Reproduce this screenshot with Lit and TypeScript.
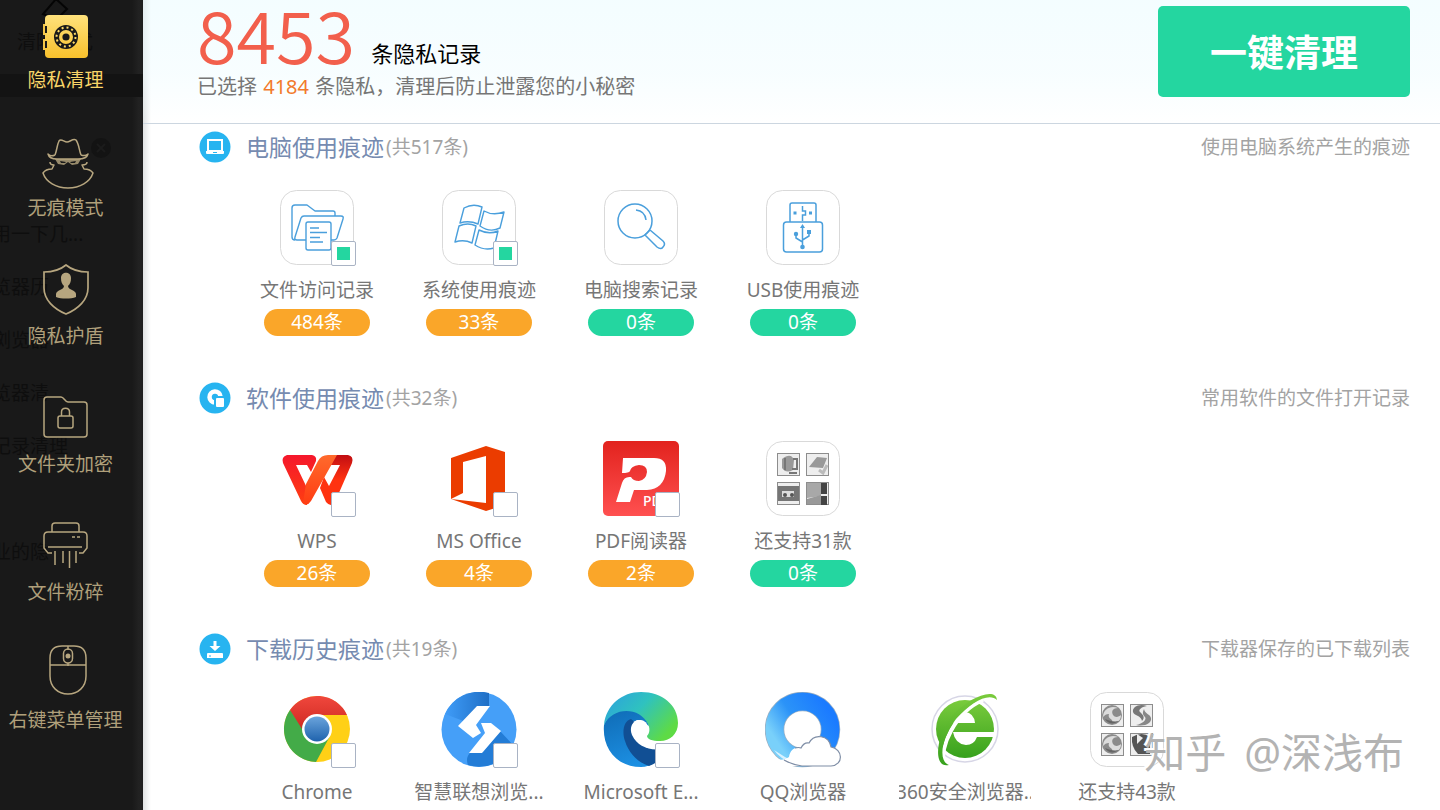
import { LitElement, html, svg, css, nothing } from "lit";
import type { SVGTemplateResult } from "lit";
import { customElement, property } from "lit/decorators.js";
import { classMap } from "lit/directives/class-map.js";

type Art = SVGTemplateResult;

interface TraceItem {
  name: string;
  art: Art;
  count?: number;
  check?: "on" | "off";
}

interface TraceGroup {
  title: string;
  total: number;
  note: string;
  mark: Art;
  items: TraceItem[];
}

const navItems: { label: string; art: Art }[] = [
  {
    label: "隐私清理",
    art: svg`
      <defs><linearGradient id="gold" x1="0" y1="0" x2="0" y2="1"><stop offset="0" stop-color="#ffe27c"/><stop offset="1" stop-color="#f7c02c"/></linearGradient></defs>
      <rect x="6" y="5" width="43" height="43" rx="4" fill="url(#gold)"/>
      <path d="M4 16h4v7H4zM4 31h4v7H4z" fill="#191919"/>
      <path d="M5 14v11M5 29v11" stroke="#f4c548" stroke-width="2"/>
      <circle cx="27" cy="27" r="9.5" fill="none" stroke="#191919" stroke-width="5"/>
      <circle cx="27" cy="27" r="9.5" fill="none" stroke="#ffdb66" stroke-width="2" stroke-dasharray="2 3"/>
      <circle cx="27" cy="27" r="3.6" fill="#191919"/>`,
  },
  {
    label: "无痕模式",
    art: svg`<g fill="none" stroke="#b7a67f" stroke-width="1.5" stroke-linejoin="round">
      <path d="M16 17c2-5 2-10 4-14 2-3 5 1 8 1s6-4 9-2c3 4 3 10 5 15M16 17c-2 1-5 1-7-1 1 4 5 5 9 5h21c5 0 9-1 10-5-2 2-4 2-7 1"/>
      <path d="M11 24c0 2 1 3 4 3l-2 4c-3 0-7 1-9 4 3 9 13 15 25 15s22-6 25-15c-2-3-6-4-9-4l-2-4c3 0 5-1 5-3"/></g>
      <path d="M16 21h26l-3 5-6 1-4-3-4 3-6-1z" fill="#b7a67f" opacity=".8"/>
      <path d="M21 23l6 1-1 1-4 0zM31 24l6-1-1 2-4 0z" fill="#191919"/>`,
  },
  {
    label: "隐私护盾",
    art: svg`<path d="M27-1C21 4 13 6 5 6v16c0 12 10 21 22 26 12-5 22-14 22-26V6C41 6 33 4 27-1z" fill="none" stroke="#b7a67f" stroke-width="1.7"/>
      <path d="M22 12c0-7 10-7 10 0 0 4-1 6-3 8 0 4 8 4 8 8v3c-5 2-15 2-20 0v-3c0-4 8-4 8-8-2-2-3-4-3-8z" fill="#b7a67f"/>`,
  },
  {
    label: "文件夹加密",
    art: svg`<g fill="none" stroke="#b7a67f" stroke-width="1.5">
      <path d="M8 3h14c3 0 4 5 7 5h16q3 0 3 3v29q0 3-3 3H8q-3 0-3-3V6q0-3 3-3z"/>
      <rect x="19" y="22" width="15" height="12" rx="2"/><path d="M22.500 22v-4c0-5 8-5 8 0v4"/></g>`,
  },
  {
    label: "文件粉碎",
    art: svg`<g fill="none" stroke="#b7a67f" stroke-width="1.5">
      <path d="M13 10V4q0-3 3-3h21q3 0 3 3v6"/>
      <path d="M13 31H9l-4-5V14q0-4 4-4h35q4 0 4 4v12l-4 5h-4M9 25h34M33 15h3M38 15h3M16 29v14M24 29v12M30.500 29v17M37 29v12"/></g>`,
  },
  {
    label: "右键菜单管理",
    art: svg`<g fill="none" stroke="#b7a67f" stroke-width="1.5">
      <path d="M11 8q0-12 12-12h12q12 0 12 12v18c0 11-8 18-18 18s-18-7-18-18zM11 15h36M29-4v4M29 13v3"/>
      <rect x="24.500" y="-1" width="9" height="14" rx="4.500"/></g><circle cx="29" cy="6" r="2.500" fill="#b7a67f"/>`,
  },
];

const plate = svg`<rect x="1.500" y="0.500" width="73" height="74" rx="16" fill="#fff" stroke="#d9d9d9"/>`;

const thumbFrames = svg`<g fill="#eee" stroke="#8d8d8d"><rect x="12.500" y="12.500" width="22" height="22"/><rect x="41.500" y="12.500" width="22" height="22"/><rect x="12.500" y="41.500" width="22" height="22"/><rect x="41.500" y="41.500" width="22" height="22"/></g>`;

const swirl = (x: number, y: number) => svg`<g transform="translate(${x} ${y})">
  <circle cx="11" cy="11" r="10" fill="#8b8b8b"/>
  <path d="M2 13C2 5 10 1 17 4c-5 0-7 3-5 7 2 3 6 2 8 0 0 6-4 8-9 7 2-3-5-3-3-8-3 0-4 1-6 3z" fill="#dcdcdc"/>
  <path d="M4 15c3 5 9 6 14 2-5 1-9 0-14-2z" fill="#666"/></g>`;

const groups: TraceGroup[] = [
  {
    title: "电脑使用痕迹",
    total: 517,
    note: "使用电脑系统产生的痕迹",
    mark: svg`<path d="M9 9h14v11H9z" fill="none" stroke="#fff" stroke-width="2"/><path d="M7 20h18v2q0 1-1 1H8q-1 0-1-1z" fill="#fff"/><path d="M14 21.500h4" stroke="#27b4f0"/>`,
    items: [
      {
        name: "文件访问记录",
        count: 484,
        check: "on",
        art: svg`${plate}<g fill="#fff" stroke="#4a9fdc" stroke-width="1.4" stroke-linejoin="round">
          <path d="M16 50q-3 0-3-3V18q0-3 3-3h12l8 6h18q2 0 2 2v3"/>
          <path d="M25 26h37q3 0 2 3l-6 19q-1 2-3 2H18q-3 0-2-3l6-19q1-2 3-2z"/>
          <rect x="27" y="32" width="25" height="28" rx="2"/><path d="M31 38h9M31 42.500h17M31 47.500h10M31 52h13"/></g>`,
      },
      {
        name: "系统使用痕迹",
        count: 33,
        check: "on",
        art: svg`${plate}<g fill="none" stroke="#4a9fdc" stroke-width="1.400" stroke-linejoin="round">
          <path d="M23 18q9-5 18-1l-4 17q-9-4-18-1zM43 21q9 5 20 1l-4 16q-10 5-20-2zM18 36q9-4 17 0l-4 17q-8-4-17-1zM38 40q10 5 19 1l-4 17q-10 3-19-3z"/></g>`,
      },
      {
        name: "电脑搜索记录",
        count: 0,
        art: svg`${plate}<g fill="none" stroke="#4a9fdc" stroke-width="1.500">
          <circle cx="32" cy="31" r="17"/><path d="M33 20q9 1 10 10M42 45l12 12q4 3 6 0 3-3 0-6L47 40M42 45l5-5"/></g>`,
      },
      {
        name: "USB使用痕迹",
        count: 0,
        art: svg`${plate}<g fill="none" stroke="#4a9fdc" stroke-width="1.500">
          <path d="M25 32V15q0-2 2-2h22q2 0 2 2v17"/><rect x="18.500" y="32" width="39" height="30" rx="3"/>
          <path d="M37.500 16v5h3v4h-3v6M37.500 37v20M31 45v3l6.500 4M44 42v4l-6.500 4"/></g>
          <g fill="#4a9fdc"><path d="M28.500 21.500h3v3h-3zM44 21.500h3v3h-3zM37.500 34l2.500 4h-5zM42 40h4v4h-4z"/><circle cx="31" cy="44" r="2.200"/><circle cx="37.500" cy="57" r="2.300"/></g>`,
      },
    ],
  },
  {
    title: "软件使用痕迹",
    total: 32,
    note: "常用软件的文件打开记录",
    mark: svg`<path d="M16 20.500a5.500 5.500 0 1 1 5.500-6" fill="none" stroke="#fff" stroke-width="4.500"/><rect x="15" y="14" width="11" height="11" rx="1" fill="#27b4f0"/><rect x="17" y="16" width="8" height="9" rx="1" fill="#fff"/>`,
    items: [
      {
        name: "WPS",
        count: 26,
        check: "off",
        art: svg`<defs>
            <linearGradient id="wa" x1="0" y1="0" x2="0" y2="1"><stop offset="0" stop-color="#f5172c"/><stop offset="1" stop-color="#ff3f10"/></linearGradient>
            <linearGradient id="wb" x1="0" y1="0" x2="0" y2="1"><stop offset="0" stop-color="#ff6a2c"/><stop offset="1" stop-color="#ff3c12"/></linearGradient>
            <linearGradient id="wc" x1="0" y1="0" x2="0" y2="1"><stop offset="0" stop-color="#c10d12"/><stop offset=".5" stop-color="#ff3210"/></linearGradient></defs>
          <path d="M52 14h17q6 1 4 8L56 61q-4 6-9 0l-6-14 4-11 5 9 11-21h-9z" fill="url(#wc)"/>
          <path d="M8 14h25q5 1 4 6l-5 11-4-7H17l11 23v17q-4 0-6-4L4 22q-2-6 4-8z" fill="url(#wa)"/>
          <path d="M27 43l12-23q3-6 10-6h9L32 60q-4 6-8 2z" fill="url(#wb)"/>`,
      },
      {
        name: "MS Office",
        count: 4,
        check: "off",
        art: svg`<path fill-rule="evenodd" d="M10 17L45 5l19 6v53l-19 6-35-12zM22 21v31l-12 6 35 4V15z" fill="#eb3c00"/>`,
      },
      {
        name: "PDF阅读器",
        count: 2,
        check: "off",
        art: svg`<defs><linearGradient id="pd" x1="0" y1="0" x2="0" y2="1"><stop offset="0" stop-color="#e2231e"/><stop offset="1" stop-color="#ff5050"/></linearGradient></defs>
          <rect width="76" height="75" x="0" rx="5" fill="url(#pd)"/>
          <path d="M20 17h31q13 0 12 13-2 18-19 19H31l-4 12H13l6-19q2-7 9-6 2 4 8 4 7-1 8-9 0-7-8-7-8 1-9 6-1 2-8 2z" fill="#fff"/>
          <text x="40" y="65" font-size="14" font-weight="500" fill="#fff" font-family="Noto Sans, sans-serif">PDF</text>`,
      },
      {
        name: "还支持31款",
        count: 0,
        art: svg`${plate}${thumbFrames}
          <path d="M17 18q9-7 12 1l-1 10q-7 4-11-2zM44 26l8-10 10 1-4 10z" fill="#999"/><path d="M20 17v12M28 18h4v10h-5M24 32h8" stroke="#777" stroke-width="2" fill="none"/>
          <path d="M54 29l4 3 4-8" stroke="#bbb" stroke-width="3" fill="none"/>
          <path d="M13 45h21v15H13z" fill="#757575"/><path d="M17 50h12v6H17z" fill="#ddd"/><circle cx="20" cy="54" r="2" fill="#555"/><circle cx="27" cy="54" r="2" fill="#555"/>
          <path d="M42 42h14v13l-14 2z" fill="#a8a8a8"/><path d="M56 42h6v22h-6z" fill="#444"/><path d="M42 58l14-4v9H42z" fill="#999"/><path d="M56 54h6" stroke="#eee" stroke-width="2"/>`,
      },
    ],
  },
  {
    title: "下载历史痕迹",
    total: 19,
    note: "下载器保存的已下载列表",
    mark: svg`<path d="M14.500 8h3v5h4l-5.500 5-5.500-5h4zM9 20h14q1 0 1 1v4H8v-4q0-1 1-1z" fill="#fff"/><path d="M10 23h2" stroke="#27b4f0"/>`,
    items: [
      {
        name: "Chrome",
        check: "off",
        art: svg`<defs><linearGradient id="cb" x1="0" y1="0" x2="0" y2="1"><stop offset="0" stop-color="#6ba4dc"/><stop offset="1" stop-color="#1f63ad"/></linearGradient>
          <linearGradient id="cr" x1="0" y1="0" x2="0" y2="1"><stop offset="0" stop-color="#f0473d"/><stop offset="1" stop-color="#cf2a22"/></linearGradient></defs>
          <circle cx="38" cy="37" r="33" fill="#ffd016"/>
          <path d="M38 37L11 18a33 33 0 0 0 26 52l14-26z" fill="#43ab48"/>
          <path d="M11 18a33 33 0 0 1 57 5H38a15 15 0 0 0-15 14z" fill="url(#cr)"/>
          <circle cx="38" cy="37" r="15" fill="#fff"/><circle cx="38" cy="37" r="12.500" fill="url(#cb)"/>`,
      },
      {
        name: "智慧联想浏览...",
        check: "off",
        art: svg`<defs><linearGradient id="la" x1="0" y1="0" x2="1" y2="0"><stop offset="0" stop-color="#3f9cf8"/><stop offset="1" stop-color="#1f6fc6"/></linearGradient></defs>
          <circle cx="38" cy="37.500" r="37.500" fill="#459ff8"/>
          <path d="M4 22A37.500 37.500 0 0 1 48 1v14L25 30z" fill="url(#la)"/><path d="M72 53A37.500 37.500 0 0 1 27 73q-3-8 3-13h12l17-21z" fill="#237cd6"/>
          <path d="M36 14h13L35 33l5 8-8 5-15-12zM40 31h10l10 8-19 22H28l16-20z" fill="#fff"/>`,
      },
      {
        name: "Microsoft E...",
        check: "off",
        art: svg`<defs>
            <linearGradient id="ea" x1="0" y1="0" x2="1" y2=".6"><stop offset="0" stop-color="#2c9fe0"/><stop offset=".5" stop-color="#2fc2bf"/><stop offset="1" stop-color="#5edb45"/></linearGradient>
            <linearGradient id="eb" x1="0" y1="0" x2=".4" y2="1"><stop offset="0" stop-color="#0f6bb5"/><stop offset="1" stop-color="#1c8fe2"/></linearGradient></defs>
          <path d="M1 33c6-19 36-21 44-4 1 2 1 5 0 7-1-5-5-8-10-8-9 2-8 15-3 22 8 10 20 11 32 5-6 13-16 20-26 20C13 75-1 56 1 33z" fill="url(#eb)"/>
          <path d="M28 27c-8 2-9 14-6 22 4 13 14 22 24 25 8-3 14-8 18-16l-5-6z" fill="#114f94"/>
          <path d="M37 28c-8 0-11 8-8 15 5 11 17 16 30 14l10-7z" fill="#fff"/>
          <path d="M1 33C3 13 19 0 38 0c21 0 37 13 37 31 0 11-8 18-18 18-8 0-13-2-13-5 3-3 3-8 1-12C37 15 10 14 1 33z" fill="url(#ea)"/>
          <circle cx="37" cy="36" r="8" fill="#fff"/>`,
      },
      {
        name: "QQ浏览器",
        art: svg`<defs><linearGradient id="qa" x1="1" y1=".2" x2=".1" y2=".8"><stop offset="0" stop-color="#1b7bff"/><stop offset=".55" stop-color="#2b93f8"/><stop offset="1" stop-color="#79d0fa"/></linearGradient></defs>
          <circle cx="37.500" cy="37.500" r="28" fill="none" stroke="#9ab0c4" stroke-width="19.500"/><circle cx="37.500" cy="37.500" r="28" fill="none" stroke="url(#qa)" stroke-width="18"/>
          <path d="M20 65L9 58q8 12 28 16z" fill="#d8f2ff"/>
          <path d="M23 74q-8-2-10-7 6 2 11-2c1-7 6-10 10-9 3-6 7-6 10-5 5-10 20-8 22 4 11 2 13 18 0 19z" fill="#fff"/>
          <path d="M30 56q4-1 6 0 3-6 8-5c5-10 20-8 22 4 12 2 13 18 0 19H37q-9-1-18-6" fill="none" stroke="#7f8ea6" stroke-width="1.200"/>`,
      },
      {
        name: "360安全浏览器..",
        art: svg`<defs><linearGradient id="ga" x1="0" y1="0" x2="0" y2="1"><stop offset="0" stop-color="#7acb3c"/><stop offset="1" stop-color="#37a11d"/></linearGradient></defs>
          <circle cx="38" cy="37" r="33" fill="#fff" stroke="#d7d6e6" stroke-width="1.500"/>
          <circle cx="38" cy="37" r="29" fill="url(#ga)"/>
          <path d="M26 31q3-11 12-11 9 1 10 11zM26 40h42v5H50q-3 8-11 8-11-1-13-13z" fill="#fff"/>
          <path d="M17 72C12 56 28 20 56 8" fill="none" stroke="#fff" stroke-width="4"/>
          <path d="M22 73C6 77 8 45 25 24 40 6 69-6 70 8 62 0 44 10 29 27 14 47 11 69 22 73z" fill="url(#ga)"/>`,
      },
      {
        name: "还支持43款",
        art: svg`${plate}${thumbFrames}${swirl(12, 12)}${swirl(12, 41)}
          <path d="M58 14c-8-3-15 1-14 6 1 4 8 3 9 9 4-4 0-7-2-9s1-5 7-6z" fill="#777"/><path d="M47 33c9 2 16-2 15-7-1-4-6-4-7-9-2 4-1 6 1 8s-2 7-9 8z" fill="#888"/>
          <path d="M43 45q10-6 18 0v17H49q-7-7-6-17z" fill="#555"/><path d="M48 42v10l6-6z" fill="#eee"/>`,
      },
    ],
  },
];

const fontStack = css`"Noto Sans", "Noto Sans CJK SC", sans-serif`;

@customElement("trace-tile")
class TraceTile extends LitElement {
  @property({ attribute: false }) item!: TraceItem;

  static styles = css`
    :host { display: flex; flex-direction: column; align-items: center; font-family: ${fontStack}; }
    .art { position: relative; width: 76px; height: 76px; }
    .art svg { display: block; width: 76px; height: 76px; }
    .check {
      appearance: none; position: absolute; right: -1px; bottom: 0;
      width: 25px; height: 25px; margin: 0; box-sizing: border-box;
      background: #fff; border: 1px solid #a9b3c4; border-radius: 2px;
    }
    .check:checked { background: linear-gradient(#24d6a0, #24d6a0) center / 13px 13px no-repeat #fff; }
    .name {
      display: flex; justify-content: center; width: 132px; margin-top: 12px; overflow: hidden;
      font-size: 19px; line-height: 24px; white-space: nowrap; color: #767676;
    }
    .count {
      width: 106px; height: 27px; margin-top: 7px; border-radius: 14px;
      background: #24d6a0; color: #fff; text-align: center; font-size: 19px; line-height: 26px;
    }
    .found { background: #faa629; }
  `;

  render() {
    const { name, art, count, check } = this.item;
    return html`
      <div class="art">
        <svg viewBox="0 0 76 76" aria-hidden="true">${art}</svg>
        ${check ? html`<input class="check" id="pick" type="checkbox" .checked=${check === "on"} />` : nothing}
      </div>
      ${check ? html`<label class="name" for="pick">${name}</label>` : html`<span class="name">${name}</span>`}
      ${count === undefined ? nothing : html`<span class=${classMap({ count: true, found: count > 0 })}>${count}条</span>`}
    `;
  }
}

@customElement("app-root")
class AppRoot extends LitElement {
  static styles = css`
    :host {
      display: flex; height: 100vh; overflow: hidden; position: relative; background: #fff;
      font-family: ${fontStack}; font-weight: 400;
    }
    .side {
      position: relative; flex: none; width: 143px; overflow: hidden; box-sizing: border-box;
      background: linear-gradient(90deg, #191919 0 132px, #222 139px, #1d1d1d 143px);
    }
    .nav { position: relative; display: flex; flex-direction: column; padding-right: 12px; }
    .nav a {
      display: flex; flex-direction: column; align-items: center; gap: 6px; height: 118px; padding-top: 10px;
      color: #b0a07b; text-decoration: none; font-size: 19px; line-height: 24px; white-space: nowrap;
    }
    .nav a.active { color: #f9d568; }
    .nav svg { width: 52px; height: 52px; flex: none; overflow: visible; }
    .ghost { position: absolute; inset: 0; color: #0e0e0e; font-size: 19px; line-height: 53px; white-space: nowrap; }
    .ghost svg { position: absolute; left: 0; top: 0; width: 143px; height: 180px; }
    .ghost .mode { position: absolute; left: 17px; top: 16px; }
    .ghost .lines { position: absolute; left: -8px; top: 208px; }
    .ghost .lines span { display: block; height: 53px; }
    .main {
      flex: 1; min-width: 0; display: flex; flex-direction: column;
      background: linear-gradient(90deg, #dfe1e2, rgba(255, 255, 255, 0) 8px);
    }
    .top {
      display: flex; justify-content: space-between; align-items: flex-start;
      padding: 0 30px 20px 54px; border-bottom: 1px solid #ccd6e0;
      background: linear-gradient(rgba(232, 251, 255, 0.5), rgba(240, 252, 255, 0.5) 60%, rgba(255, 255, 255, 0));
    }
    .total { display: flex; align-items: flex-end; gap: 16px; color: #000; font-size: 22px; line-height: 36px; }
    .total strong {
      font-family: "Noto Sans CJK SC", sans-serif; font-weight: 350; font-size: 72px; line-height: 66px;
      padding-bottom: 5px; color: #f25f4c;
    }
    .picked { font-size: 20px; line-height: 32px; color: #767676; margin: 0; }
    .picked em { font-style: normal; color: #f27a2b; margin: 0 1px; }
    .clean {
      width: 252px; height: 91px; margin-top: 6px; padding: 2px 0 0; border: 0; border-radius: 5px;
      background: #24d6a0; color: #fff; font: 700 37px/50px ${fontStack};
    }
    .list { flex: 1; min-height: 0; overflow: hidden; padding: 7px 30px 0 56px; }
    .group { height: 251px; }
    .head { display: flex; align-items: center; }
    .head svg { width: 32px; height: 32px; margin-right: 15px; }
    .head h2 { margin: 0 2px 0 0; font-size: 23px; line-height: 32px; font-weight: 400; color: #768bb0; }
    .head .sum { font-size: 19px; line-height: 32px; color: #a3a3a3; }
    .head .note { margin-left: auto; font-size: 19px; line-height: 32px; color: #a3a3a3; }
    .tiles { display: grid; grid-template-columns: repeat(auto-fill, 162px); padding: 27px 0 0 37px; }
    .sign {
      position: absolute; right: 36px; bottom: 28px; display: flex; gap: 18px;
      font-size: 41px; line-height: 60px; color: #b3b3b3; text-shadow: -2px -2px 0 #fff;
    }
  `;

  render() {
    return html`
      <aside class="side">
        <div class="ghost" aria-hidden="true">
          <svg viewBox="0 0 143 180"><rect y="74" width="143" height="23" fill="#131313"/><path d="M56-1l11 10-9 9h-5L43 14z" fill="none" stroke="#050505" stroke-width="2"/><circle cx="101" cy="148" r="10" fill="#131313"/><path d="M97 144l8 8M105 144l-8 8" stroke="#1b1b1b" stroke-width="2"/></svg>
          <span class="mode">清除模式</span>
          <div class="lines">
            <span>用一下几...</span><span>览器历</span><span>浏览器</span><span>览器清</span><span>记录清理</span><span></span><span>业的隐</span>
          </div>
        </div>
        <nav class="nav">
          ${navItems.map(
            (n, i) => html`<a href="#" class=${classMap({ active: i === 0 })}><svg viewBox="1 0 52 52" aria-hidden="true">${n.art}</svg>${n.label}</a>`
          )}
        </nav>
      </aside>
      <main class="main">
        <header class="top">
          <div>
            <div class="total"><strong>8453</strong><span>条隐私记录</span></div>
            <p class="picked">已选择 <em>4184</em> 条隐私，清理后防止泄露您的小秘密</p>
          </div>
          <button class="clean" type="button">一键清理</button>
        </header>
        <div class="list">
          ${groups.map(
            (g) => html`<section class="group">
              <div class="head">
                <svg viewBox="0 0 32 32" aria-hidden="true"><circle cx="16" cy="16" r="15.500" fill="#27b4f0"/>${g.mark}</svg>
                <h2>${g.title}</h2><span class="sum">(共${g.total}条)</span><span class="note">${g.note}</span>
              </div>
              <div class="tiles">${g.items.map((t) => html`<trace-tile .item=${t}></trace-tile>`)}</div>
            </section>`
          )}
        </div>
      </main>
      <div class="sign"><span>知乎</span><span>@深浅布</span></div>
    `;
  }
}
